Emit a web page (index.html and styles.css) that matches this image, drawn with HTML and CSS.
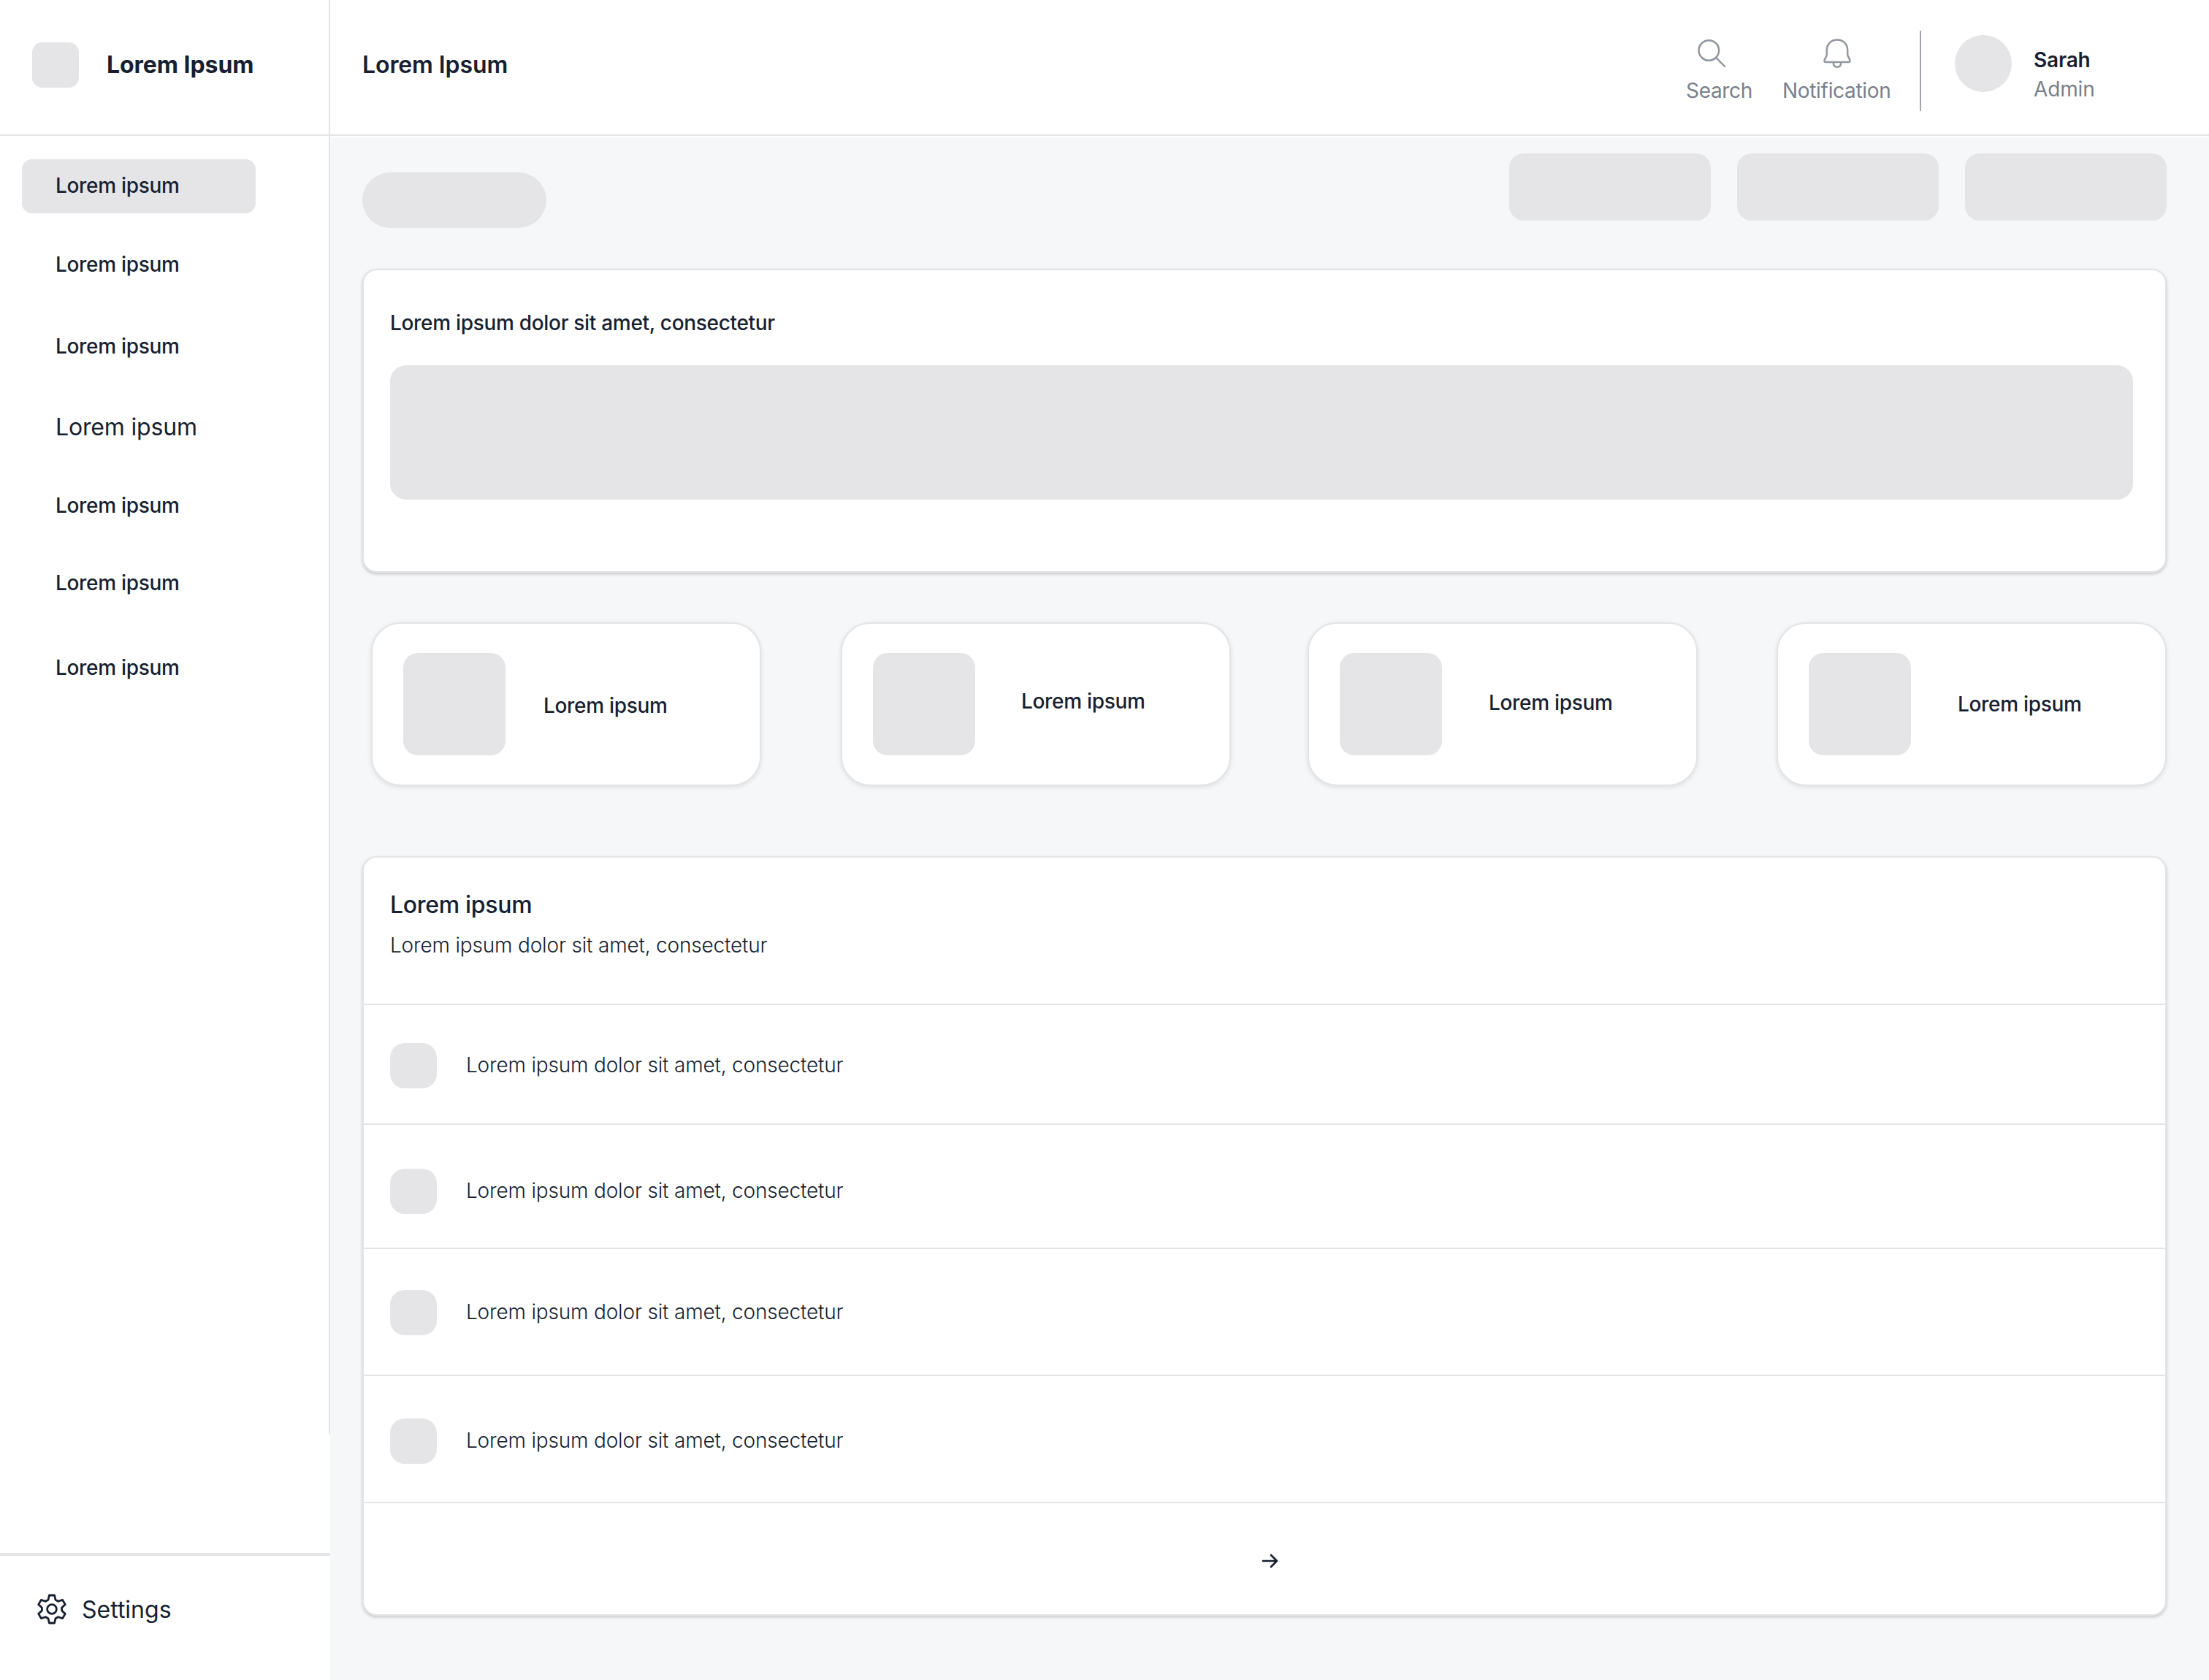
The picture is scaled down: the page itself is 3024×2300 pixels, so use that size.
FILE: index.html
```html
<!DOCTYPE html>
<html lang="en">
<head>
<meta charset="utf-8">
<title>Dashboard</title>
<link rel="stylesheet" href="styles.css">
</head>
<body>
<div class="app">
  <aside class="sidebar">
    <div class="brand">
      <span class="brand-mark"></span>
      <span class="brand-name">Lorem Ipsum</span>
    </div>
    <nav class="nav">
      <a class="nav-item active">Lorem ipsum</a>
      <a class="nav-item n2">Lorem ipsum</a>
      <a class="nav-item n3">Lorem ipsum</a>
      <a class="nav-item n4">Lorem ipsum</a>
      <a class="nav-item n5">Lorem ipsum</a>
      <a class="nav-item n6">Lorem ipsum</a>
      <a class="nav-item n7">Lorem ipsum</a>
    </nav>
    <div class="settings">
      <svg class="gear" viewBox="-22 -22 44 44" fill="none" stroke="currentColor" stroke-width="2.8" stroke-linejoin="round">
        <path d="M-5-12.8-3.6-19H3.6L5-12.8 8.59-10.73 14.65-12.62 18.25-6.38 13.59-2.07V2.07L18.25 6.38 14.65 12.62 8.59 10.73 5 12.8 3.6 19H-3.6L-5 12.8-8.59 10.73-14.65 12.62-18.25 6.38-13.59 2.07V-2.07L-18.25-6.38-14.65-12.62-8.59-10.73Z"/>
        <circle r="6.4"/>
      </svg>
      <span class="settings-label">Settings</span>
    </div>
  </aside>

  <div class="main">
    <header class="topbar">
      <h1 class="page-title">Lorem Ipsum</h1>
      <div class="action search">
        <svg class="icon" viewBox="0 0 44 44" fill="none" stroke="currentColor" stroke-width="2.5" stroke-linecap="round">
          <circle cx="18.3" cy="19" r="13.8"/>
          <path d="M28.5 29.2 40 41"/>
        </svg>
        <span>Search</span>
      </div>
      <div class="action notification">
        <svg class="icon" viewBox="0 0 44 44" fill="none" stroke="currentColor" stroke-width="2.5" stroke-linejoin="round">
          <path d="M22 4.600c-8.400 0-14.200 6-14.200 14v6c0 3.400-3.300 5.600-3.300 8.600 0 1.200.7 1.800 1.800 1.800h31.400c1.100 0 1.800-.6 1.800-1.800 0-3-3.300-5.200-3.300-8.600v-6c0-8-5.800-14-14.200-14Z"/>
          <path d="M16.800 35.400c0 4 2.100 6.300 5.200 6.300s5.200-2.300 5.200-6.300"/>
        </svg>
        <span>Notification</span>
      </div>
      <div class="user">
        <span class="avatar"></span>
        <div class="user-text">
          <span class="user-name">Sarah</span>
          <span class="user-role">Admin</span>
        </div>
      </div>
    </header>

    <main class="content">
      <div class="toolbar">
        <span class="pill"></span>
        <div class="buttons">
          <span class="button"></span>
          <span class="button"></span>
          <span class="button"></span>
        </div>
      </div>

      <section class="card hero">
        <h2 class="hero-title">Lorem ipsum dolor sit amet, consectetur</h2>
        <div class="hero-block"></div>
      </section>

      <div class="stats">
        <div class="stat s1"><span class="stat-icon"></span><span class="stat-label">Lorem ipsum</span></div>
        <div class="stat s2"><span class="stat-icon"></span><span class="stat-label">Lorem ipsum</span></div>
        <div class="stat s3"><span class="stat-icon"></span><span class="stat-label">Lorem ipsum</span></div>
        <div class="stat s4"><span class="stat-icon"></span><span class="stat-label">Lorem ipsum</span></div>
      </div>

      <section class="card list">
        <div class="list-head">
          <h2 class="list-title">Lorem ipsum</h2>
          <p class="list-sub">Lorem ipsum dolor sit amet, consectetur</p>
        </div>
        <div class="row r1"><span class="row-icon"></span><span class="row-text">Lorem ipsum dolor sit amet, consectetur</span></div>
        <div class="row r2"><span class="row-icon"></span><span class="row-text">Lorem ipsum dolor sit amet, consectetur</span></div>
        <div class="row r3"><span class="row-icon"></span><span class="row-text">Lorem ipsum dolor sit amet, consectetur</span></div>
        <div class="row r4"><span class="row-icon"></span><span class="row-text">Lorem ipsum dolor sit amet, consectetur</span></div>
        <div class="list-foot">
          <svg class="arrow" viewBox="0 0 24 24" fill="none" stroke="currentColor" stroke-width="2.6" stroke-linejoin="round" stroke-linecap="round">
            <path d="M2 12H21M13 4 21 12 13 20"/>
          </svg>
        </div>
      </section>
    </main>
  </div>
</div>
</body>
</html>
```
FILE: styles.css
```css
:root {
  --ink: #171f30;
  --muted: #7a7f8b;
  --icon: #92969e;
  --block: #e5e5e7;
  --line: #e4e4e6;
  --bg: #f6f7f9;
}

* { box-sizing: border-box; }

body {
  margin: 0;
  background: var(--bg);
  color: var(--ink);
  font-family: Inter, "Liberation Sans", sans-serif;
  font-size: 28px;
  font-weight: 500;
  line-height: 34px;
  letter-spacing: -.31px;
}

h1, h2, p { margin: 0; font-size: inherit; font-weight: inherit; }

.app { display: flex; width: 3024px; height: 2300px; overflow: hidden; }

/* Sidebar */
.sidebar {
  display: flex;
  flex-direction: column;
  width: 452px;
  background:
    linear-gradient(var(--line), var(--line)) right top / 2px 1964px no-repeat,
    #fff;
}
.brand {
  display: flex;
  align-items: center;
  height: 186px;
  padding: 0 0 6px 44px;
  border-bottom: 2px solid var(--line);
}
.brand-mark { width: 64px; height: 62px; border-radius: 14px; background: var(--block); }
.brand-name { margin-left: 38px; font-size: 32px; font-weight: 700; line-height: 40px; letter-spacing: -.05px; }
.nav { display: flex; flex: 1; flex-direction: column; padding: 32px 0 0 30px; }
.nav-item {
  display: flex;
  align-items: center;
  width: 320px;
  height: 74px;
  padding: 0 0 2px 46px;
  border-radius: 14px;
}
.active { background: var(--block); }
.n2 { margin-top: 34px; }
.n3 { margin-top: 38px; }
.n4 { margin-top: 37px; font-size: 32px; font-weight: 400; letter-spacing: -.17px; }
.n5 { margin-top: 33px; }
.n6 { margin-top: 32px; }
.n7 { margin-top: 42px; }
.settings {
  display: flex;
  align-items: center;
  height: 174px;
  padding: 0 0 24px 49px;
  border-top: 4px solid var(--line);
  font-size: 32px;
  font-weight: 400;
  line-height: 40px;
  letter-spacing: 0;
}
.settings-label { padding-top: 2px; }
.gear { width: 44px; height: 44px; margin-right: 19px; }

/* Top bar */
.main { display: flex; flex: 1; flex-direction: column; }
.topbar {
  display: flex;
  height: 188px;
  padding-left: 44px;
  background: linear-gradient(var(--line), var(--line)) 0 184px / 100% 2px no-repeat, #fff;
}
.page-title { margin: 69px auto 0 0; font-size: 32px; font-weight: 600; line-height: 40px; letter-spacing: -.1px; }
.action {
  display: flex;
  flex-direction: column;
  padding-top: 50px;
  color: var(--muted);
  font-weight: 400;
}
.icon { width: 44px; height: 44px; margin-bottom: 13px; color: var(--icon); }
.search { width: 132px; }
.search .icon { margin-left: 13px; }
.notification { width: 188px; }
.notification .icon { margin-left: 53px; }
.user {
  display: flex;
  width: 396px;
  height: 110px;
  margin-top: 42px;
  padding: 6px 0 0 46px;
  border-left: 2px solid #a3a6ac;
}
.avatar { width: 78px; height: 78px; border-radius: 50%; background: var(--block); }
.user-text { display: flex; flex-direction: column; margin: 14px 0 0 30px; line-height: 40px; letter-spacing: -.15px; }
.user-name { font-weight: 600; }
.user-role { color: var(--muted); font-weight: 400; }

/* Content */
.content { display: flex; flex-direction: column; padding: 22px 58px 0 44px; }
.toolbar { display: flex; justify-content: space-between; height: 158px; }
.pill { width: 252px; height: 76px; margin-top: 26px; border-radius: 38px; background: var(--block); }
.buttons { display: flex; gap: 36px; }
.button { width: 276px; height: 92px; border-radius: 20px; background: var(--block); }

.card {
  border: 2px solid var(--line);
  border-radius: 20px;
  background: #fff;
  box-shadow: 0 2px 4px rgba(0, 0, 0, .2);
}
.hero { height: 416px; padding: 55px 44px 0 36px; }
.hero-title { height: 75px; }
.hero-block { height: 184px; border-radius: 22px; background: var(--block); }

.stats { display: flex; margin: 68px 0 96px; padding-left: 12px; }
.stat {
  display: flex;
  width: 534px;
  height: 224px;
  padding: 40px 42px;
  border: 2px solid var(--line);
  border-radius: 40px;
  background: #fff;
  box-shadow: 0 2px 6px rgba(0, 0, 0, .1);
}
.s2 { margin-left: 109px; }
.s3 { margin-left: 105px; }
.s4 { margin-left: 108px; }
.stat-icon { width: 140px; height: 140px; border-radius: 20px; background: var(--block); }
.stat-label { margin: 49px 0 0 63px; }
.s1 .stat-label { margin: 55px 0 0 52px; }
.s3 .stat-label { margin: 51px 0 0 64px; }
.s4 .stat-label { margin: 53px 0 0 64px; }

.list { height: 1040px; }
.list-head { height: 200px; padding: 45px 36px 0; }
.list-title { font-size: 32px; line-height: 40px; }
.list-sub { margin-top: 18px; font-weight: 300; letter-spacing: -.18px; }
.row { display: flex; padding: 0 36px; border-top: 2px solid var(--line); }
.r1 { height: 164px; padding-top: 52px; }
.r2 { height: 170px; padding-top: 60px; }
.r3 { height: 174px; padding-top: 56px; }
.r4 { height: 174px; padding-top: 58px; }
.row-icon { width: 64px; height: 62px; border-radius: 20px; background: var(--block); }
.row-text { margin: 13px 0 0 40px; font-weight: 300; letter-spacing: -.18px; }
.list-foot { height: 154px; padding: 67px 0 0 1229px; border-top: 2px solid var(--line); }
.arrow { display: block; width: 24px; height: 24px; }
```
